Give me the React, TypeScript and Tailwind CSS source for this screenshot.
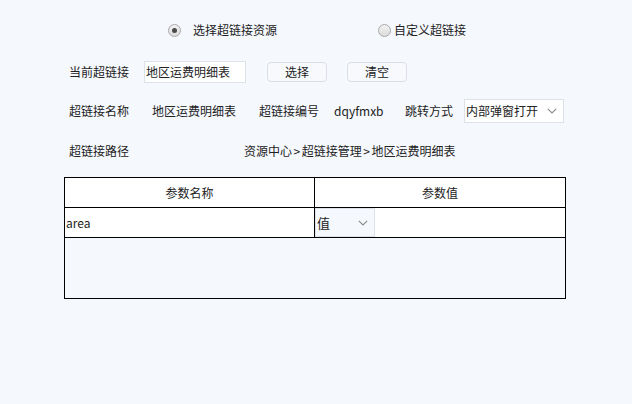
import React from "react";

const Chevron = ({ cls }: { cls: string }) => (
  <svg className={cls} width="10" height="6" viewBox="0 0 10 6" fill="none">
    <path d="M0.8 0.8 L5 5 L9.2 0.8" stroke="#8a8a8a" strokeWidth="1.1" />
  </svg>
);

const Radio = ({ checked }: { checked?: boolean }) => (
  <span className="w-[13px] h-[13px] rounded-full border border-[#a8a8a8] bg-gradient-to-b from-[#f2f2f2] to-[#dcdcdc] flex items-center justify-center shrink-0">
    {checked && <span className="w-[5px] h-[5px] rounded-full bg-[#4a4a4a]" />}
  </span>
);

export default function App() {
  return (
    <div
      className="w-[632px] h-[404px] bg-[#f5f8fd] text-[12px] text-[#222] overflow-hidden"
      style={{ fontFamily: '"Noto Sans CJK SC", "Noto Sans", sans-serif' }}
    >
      {/* Row 1 */}
      <div className="mt-[20px] h-[20px] flex items-center pl-[168px]">
        <div className="w-[210px] flex items-center">
          <Radio checked />
          <span className="ml-[12px] leading-none">选择超链接资源</span>
        </div>
        <div className="flex items-center">
          <Radio />
          <span className="ml-[3px] leading-none">自定义超链接</span>
        </div>
      </div>

      {/* Row 2 */}
      <div className="mt-[21px] h-[22px] flex items-center pl-[69px]">
        <span className="w-[75px] leading-none">当前超链接</span>
        <div className="w-[102px] h-[22px] border border-[#dde1e8] bg-white flex items-center pl-[1px] leading-none">
          地区运费明细表
        </div>
        <button className="ml-[21px] w-[60px] h-[20px] rounded-[4px] border border-[#dcdfe6] bg-[#f7f9fc] flex items-center justify-center leading-none">
          选择
        </button>
        <button className="ml-[20px] w-[60px] h-[20px] rounded-[4px] border border-[#dcdfe6] bg-[#f7f9fc] flex items-center justify-center leading-none">
          清空
        </button>
      </div>

      {/* Row 3 */}
      <div className="mt-[16px] h-[24px] flex items-center pl-[69px]">
        <span className="w-[83px] leading-none">超链接名称</span>
        <span className="w-[107px] leading-none">地区运费明细表</span>
        <span className="w-[75px] leading-none">超链接编号</span>
        <span className="w-[71px] leading-none">dqyfmxb</span>
        <span className="w-[59px] leading-none">跳转方式</span>
        <div className="w-[100px] h-[24px] border border-[#dde1e8] bg-white flex items-center pl-[1px] pr-[6px] justify-between">
          <span className="leading-none">内部弹窗打开</span>
          <Chevron cls="" />
        </div>
      </div>

      {/* Row 4 */}
      <div className="mt-[18px] h-[20px] flex items-center pl-[69px]">
        <span className="w-[175px] leading-none">超链接路径</span>
        <span className="leading-none flex items-center">
          资源中心<span className="mx-[1.5px]">&gt;</span>超链接管理<span className="mx-[1.5px]">&gt;</span>地区运费明细表
        </span>
      </div>

      {/* Table */}
      <div className="mt-[16px] ml-[64px] w-[502px] border border-black">
        <div className="h-[30px] flex border-b border-black bg-white">
          <div className="w-[250px] border-r border-black flex items-center justify-center leading-none">
            参数名称
          </div>
          <div className="flex-1 flex items-center justify-center leading-none">参数值</div>
        </div>
        <div className="h-[30px] flex border-b border-black bg-white">
          <div className="w-[250px] border-r border-black flex items-center pl-[1px] leading-none">
            area
          </div>
          <div className="flex-1 flex">
            <div className="w-[60px] h-full border border-[#dde1e8] bg-[#f5f8fd] flex items-center justify-between pl-[1px] pr-[6px]">
              <span className="leading-none text-[13px]">值</span>
              <Chevron cls="" />
            </div>
          </div>
        </div>
        <div className="h-[60px]" />
      </div>
    </div>
  );
}
